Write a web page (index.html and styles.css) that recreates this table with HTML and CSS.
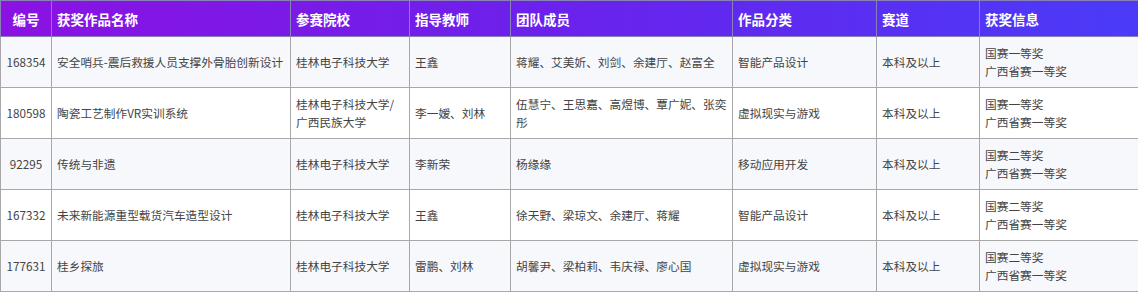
FILE: index.html
```html
<!DOCTYPE html>
<html lang="zh-CN">
<head>
<meta charset="utf-8">
<title>获奖作品</title>
<link rel="stylesheet" href="styles.css">
</head>
<body>
<table class="awards">
  <colgroup>
    <col class="c-id"><col class="c-name"><col class="c-school"><col class="c-teacher"><col class="c-team"><col class="c-cat"><col class="c-track"><col class="c-prize">
  </colgroup>
  <thead>
    <tr>
      <th class="num">编号</th>
      <th>获奖作品名称</th>
      <th>参赛院校</th>
      <th>指导教师</th>
      <th>团队成员</th>
      <th>作品分类</th>
      <th>赛道</th>
      <th>获奖信息</th>
    </tr>
  </thead>
  <tbody>
    <tr>
      <td class="num">168354</td>
      <td>安全哨兵-震后救援人员支撑外骨胎创新设计</td>
      <td>桂林电子科技大学</td>
      <td>王鑫</td>
      <td>蒋耀、艾美妡、刘剑、余建厅、赵富全</td>
      <td>智能产品设计</td>
      <td>本科及以上</td>
      <td>国赛一等奖<br>广西省赛一等奖</td>
    </tr>
    <tr>
      <td class="num">180598</td>
      <td>陶瓷工艺制作VR实训系统</td>
      <td>桂林电子科技大学/<br>广西民族大学</td>
      <td>李一嫒、刘林</td>
      <td>伍慧宁、王思嘉、高煜博、覃广妮、张奕彤</td>
      <td>虚拟现实与游戏</td>
      <td>本科及以上</td>
      <td>国赛一等奖<br>广西省赛一等奖</td>
    </tr>
    <tr>
      <td class="num">92295</td>
      <td>传统与非遗</td>
      <td>桂林电子科技大学</td>
      <td>李新荣</td>
      <td>杨缘缘</td>
      <td>移动应用开发</td>
      <td>本科及以上</td>
      <td>国赛二等奖<br>广西省赛一等奖</td>
    </tr>
    <tr>
      <td class="num">167332</td>
      <td>未来新能源重型载货汽车造型设计</td>
      <td>桂林电子科技大学</td>
      <td>王鑫</td>
      <td>徐天野、梁琼文、余建厅、蒋耀</td>
      <td>智能产品设计</td>
      <td>本科及以上</td>
      <td>国赛二等奖<br>广西省赛一等奖</td>
    </tr>
    <tr>
      <td class="num">177631</td>
      <td>桂乡探旅</td>
      <td>桂林电子科技大学</td>
      <td>雷鹏、刘林</td>
      <td>胡馨尹、梁柏莉、韦庆禄、廖心国</td>
      <td>虚拟现实与游戏</td>
      <td>本科及以上</td>
      <td>国赛二等奖<br>广西省赛一等奖</td>
    </tr>
  </tbody>
</table>
</body>
</html>
```

FILE: styles.css
```css
html, body {
  margin: 0;
  padding: 0;
  background: #ffffff;
  overflow: hidden;
}

.awards {
  width: 1139px;
  border-collapse: collapse;
  table-layout: fixed;
  font-family: "Noto Sans CJK SC", "Noto Sans", sans-serif;
  font-size: 11.7px;
  color: #444444;
}

.c-id { width: 51px; }
.c-name { width: 239px; }
.c-school { width: 119px; }
.c-teacher { width: 101px; }
.c-team { width: 222px; }
.c-cat { width: 144px; }
.c-track { width: 103px; }
.c-prize { width: 160px; }

.awards thead tr {
  background: linear-gradient(to right, #8b12e2 0%, #6a22ec 50%, #4a3bf8 100%);
}

.awards th {
  height: 35px;
  padding: 0 5px;
  text-align: left;
  color: #ffffff;
  font-weight: 700;
  font-size: 13.5px;
  border: 1px solid #8a80b8;
  vertical-align: middle;
}

.awards td {
  height: 50px;
  padding: 0 5px;
  line-height: 18px;
  border: 1px solid #a8a8a8;
  vertical-align: middle;
  text-align: left;
}

.awards tbody tr:nth-child(odd) {
  background: #f7f8fc;
}

.awards tbody tr:nth-child(even) {
  background: #ffffff;
}

.awards .num {
  text-align: center;
  padding: 0 2px;
}
```
